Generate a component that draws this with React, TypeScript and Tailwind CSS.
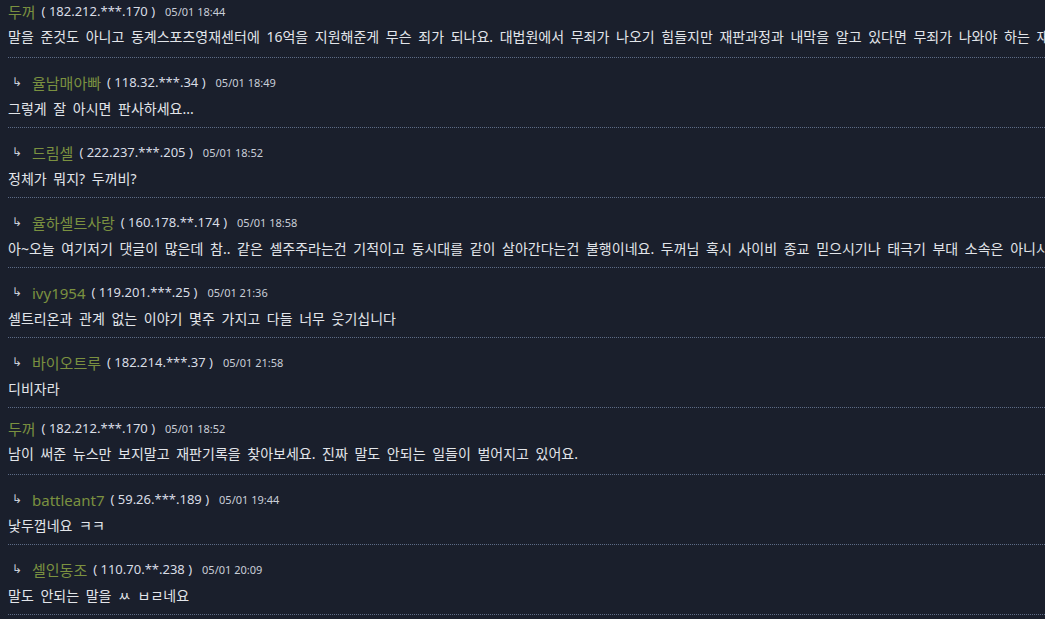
type Comment = {
  name: string;
  ip: string;
  date: string;
  text: string;
  reply?: boolean;
};

const comments: Comment[] = [
  {
    name: '두꺼',
    ip: '182.212.***.170',
    date: '05/01 18:44',
    text: '말을 준것도 아니고 동계스포츠영재센터에 16억을 지원해준게 무슨 죄가 되나요. 대법원에서 무죄가 나오기 힘들지만 재판과정과 내막을 알고 있다면 무죄가 나와야 하는 재판이라고 생각합니다.',
  },
  { name: '율남매아빠', ip: '118.32.***.34', date: '05/01 18:49', text: '그렇게 잘 아시면 판사하세요...', reply: true },
  { name: '드림셀', ip: '222.237.***.205', date: '05/01 18:52', text: '정체가 뭐지? 두꺼비?', reply: true },
  {
    name: '율하셀트사랑',
    ip: '160.178.**.174',
    date: '05/01 18:58',
    text: '아~오늘 여기저기 댓글이 많은데 참.. 같은 셀주주라는건 기적이고 동시대를 같이 살아간다는건 불행이네요. 두꺼님 혹시 사이비 종교 믿으시기나 태극기 부대 소속은 아니시죠?',
    reply: true,
  },
  { name: 'ivy1954', ip: '119.201.***.25', date: '05/01 21:36', text: '셀트리온과 관계 없는 이야기 몇주 가지고 다들 너무 웃기십니다', reply: true },
  { name: '바이오트루', ip: '182.214.***.37', date: '05/01 21:58', text: '디비자라', reply: true },
  {
    name: '두꺼',
    ip: '182.212.***.170',
    date: '05/01 18:52',
    text: '남이 써준 뉴스만 보지말고 재판기록을 찾아보세요. 진짜 말도 안되는 일들이 벌어지고 있어요.',
  },
  { name: 'battleant7', ip: '59.26.***.189', date: '05/01 19:44', text: '낯두껍네요 ㅋㅋ', reply: true },
  { name: '셀인동조', ip: '110.70.**.238', date: '05/01 20:09', text: '말도 안되는 말을 ㅆ ㅂㄹ네요', reply: true },
];

function CommentRow({ c }: { c: Comment }) {
  return (
    <div
      className={
        'border-b border-dotted border-[#5d6b86] ' +
        (c.reply ? 'pt-[15px] pb-[8px]' : 'pt-[11px] pb-[10px]')
      }
    >
      <div className="flex items-center h-5 whitespace-nowrap">
        {c.reply && <span className="text-[12px] leading-none text-[#c9ced8] pl-[4px] w-[24px] -mt-[3px]">↳</span>}
        <span className="text-[15px] text-[#7b9140]">{c.name}</span>
        <span className="text-[13px] text-[#d9dde5] ml-[6px]">( {c.ip} )</span>
        <span className="text-[11px] text-[#c9ced8] ml-[10px]">{c.date}</span>
      </div>
      <div
        className={
          'h-5 leading-5 text-[14px] text-[#e2e5ea] whitespace-nowrap overflow-hidden [word-spacing:3px] ' +
          (c.reply ? 'mt-[6px]' : 'mt-[5px]')
        }
      >
        {c.text}
      </div>
    </div>
  );
}

export default function App() {
  return (
    <div
      className="w-[1045px] h-[619px] overflow-hidden bg-[#1a1f2c]"
      style={{ fontFamily: '"Noto Sans", "Noto Sans CJK KR", sans-serif' }}
    >
      <div className="pl-2 -mt-[9px]">
        {comments.map((c, i) => (
          <CommentRow key={i} c={c} />
        ))}
      </div>
    </div>
  );
}
